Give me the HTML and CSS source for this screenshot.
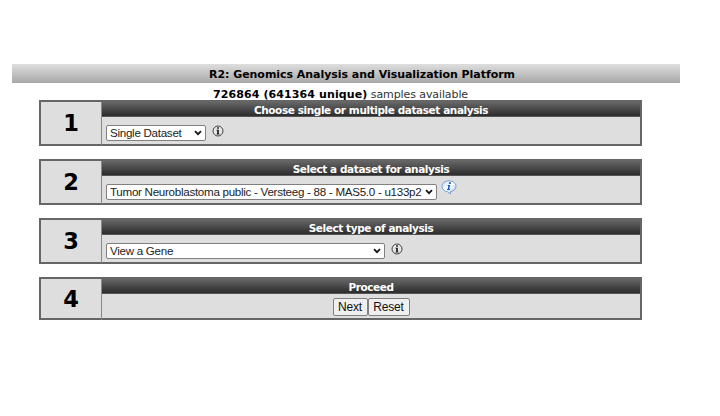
FILE: index.html
```html
<!DOCTYPE html>
<html lang="en">
<head>
<meta charset="utf-8">
<title>R2: Genomics Analysis and Visualization Platform</title>
<link rel="stylesheet" href="styles.css">
</head>
<body>
<h1 class="banner">R2: Genomics Analysis and Visualization Platform</h1>
<main class="steps">
<p class="samples"><b>726864 (641364 unique)</b> <span class="available">samples available</span></p>
<section class="step">
  <div class="number">1</div>
  <div class="content">
    <h2 class="title">Choose single or multiple dataset analysis</h2>
    <div class="row">
      <div class="picker single"><select><option>Single Dataset</option></select><svg class="chevron" viewBox="0 0 8 6"><path d="M1 1.2 4 4.2 7 1.2"/></svg></div>
      <svg class="info" viewBox="0 0 12 12"><circle cx="6" cy="6" r="5"/><path d="M5.200 2.200h1.600v1.500H5.200zM4.500 4.700h2.300v4h.8v.8H4.500v-.8h.7V5.500h-.7z"/></svg>
    </div>
  </div>
</section>
<section class="step">
  <div class="number">2</div>
  <div class="content">
    <h2 class="title">Select a dataset for analysis</h2>
    <div class="row second">
      <div class="picker dataset"><select><option>Tumor Neuroblastoma public - Versteeg - 88 - MAS5.0 - u133p2</option></select><svg class="chevron" viewBox="0 0 8 6"><path d="M1 1.2 4 4.2 7 1.2"/></svg></div>
      <svg class="bubble" viewBox="0 0 16 15">
        <defs><linearGradient id="sky" x1="0" y1="0" x2="1" y2="1"><stop offset="0" stop-color="#b9d3f2"/><stop offset=".45" stop-color="#fff"/><stop offset="1" stop-color="#a5c5ea"/></linearGradient></defs>
        <path class="bubble-shape" d="M8 .8C4 .8 1 3.200 1 6.300s2.400 5 5.500 5.400L9.300 14l.2-2.400C12.800 11.200 15 9 15 6.300 15 3.200 12 .8 8 .8z"/>
        <path class="bubble-i" d="M8.200 2.300h1.800l-.4 1.600H7.800zM6.900 5h2.300l-1 4h.9l-.3 1H5.900l.3-1h.5l.7-3h-.8z"/>
      </svg>
    </div>
  </div>
</section>
<section class="step">
  <div class="number">3</div>
  <div class="content">
    <h2 class="title">Select type of analysis</h2>
    <div class="row">
      <div class="picker kind"><select><option>View a Gene</option></select><svg class="chevron" viewBox="0 0 8 6"><path d="M1 1.2 4 4.2 7 1.2"/></svg></div>
      <svg class="info" viewBox="0 0 12 12"><circle cx="6" cy="6" r="5"/><path d="M5.200 2.200h1.600v1.500H5.200zM4.500 4.700h2.300v4h.8v.8H4.500v-.8h.7V5.500h-.7z"/></svg>
    </div>
  </div>
</section>
<section class="step last">
  <div class="number">4</div>
  <div class="content">
    <h2 class="title">Proceed</h2>
    <div class="row actions"><button class="next">Next</button><button class="reset">Reset</button></div>
  </div>
</section>
</main>
</body>
</html>
```
FILE: styles.css
```css
* { box-sizing: border-box; }
body {
  margin: 0;
  padding: 64px 40px 0 12px;
  background: #fff;
  color: #000;
  font: 11px/14px "DejaVu Sans", Verdana, sans-serif;
}
.banner {
  margin: 0;
  height: 19px;
  padding-left: 32px;
  background: linear-gradient(#dedede, #a8a8a8);
  font-size: 11px;
  line-height: 21px;
  letter-spacing: -0.04px;
  text-align: center;
}
.steps { width: 603px; margin-left: 27px; }
.samples { margin: 0; height: 17px; line-height: 23px; text-align: center; white-space: nowrap; }
.samples .available { color: #333; letter-spacing: -0.1px; }
.samples b { letter-spacing: 0.1px; }
.step {
  display: grid;
  grid-template-columns: 61px 1fr;
  height: 46px;
  margin-bottom: 13px;
  border: 2px solid #666;
  background: #dedede;
}
.step.last { height: 43px; margin-bottom: 0; }
.number {
  border-right: 1px solid #888;
  font-size: 22.5px;
  font-weight: bold;
  line-height: 43px;
  text-align: center;
}
.last .number { line-height: 41px; }
.title {
  margin: 0;
  height: 15px;
  border-bottom: 1px solid #555;
  background: linear-gradient(#666, #2c2c2c);
  color: #fff;
  font-size: 10.5px;
  line-height: 16px;
  letter-spacing: -0.41px;
  text-align: center;
}
.row { display: flex; align-items: flex-start; gap: 6px; padding: 8px 0 0 4px; }
.second { gap: 4px; }
.picker { position: relative; height: 16px; }
.single { width: 100px; }
.dataset { width: 331px; }
.kind { width: 279px; }
.picker select {
  appearance: none;
  display: block;
  width: 100%;
  height: 16px;
  margin: 0;
  padding: 0 3px;
  border: 1px solid #808080;
  border-radius: 2px;
  background: #fff;
  color: #222;
  font: 11.6px/14px "Liberation Sans", Arial, sans-serif;
  letter-spacing: -0.28px;
}
.chevron { position: absolute; right: 4px; top: 5px; width: 8px; height: 6px; fill: none; stroke: #111; stroke-width: 1.7; }
.info { width: 12px; height: 12px; }
.info circle { fill: #e6e6e6; stroke: #444; stroke-width: 1; }
.info path { fill: #111; }
.bubble { width: 16px; height: 15px; margin-top: -4px; }
.bubble-shape { fill: url(#sky); stroke: #6f98c8; stroke-width: .9; }
.bubble-i { fill: #1557b5; }
.actions { justify-content: center; gap: 0; padding: 4px 0 0; }
.actions button {
  height: 18px;
  margin: 0;
  padding: 0;
  border: 1px solid #808080;
  border-radius: 2px;
  background: #efefef;
  color: #111;
  font: 12px/16px "Liberation Sans", Arial, sans-serif;
  letter-spacing: -0.2px;
}
.next { width: 35px; }
.reset { width: 42px; }
```
